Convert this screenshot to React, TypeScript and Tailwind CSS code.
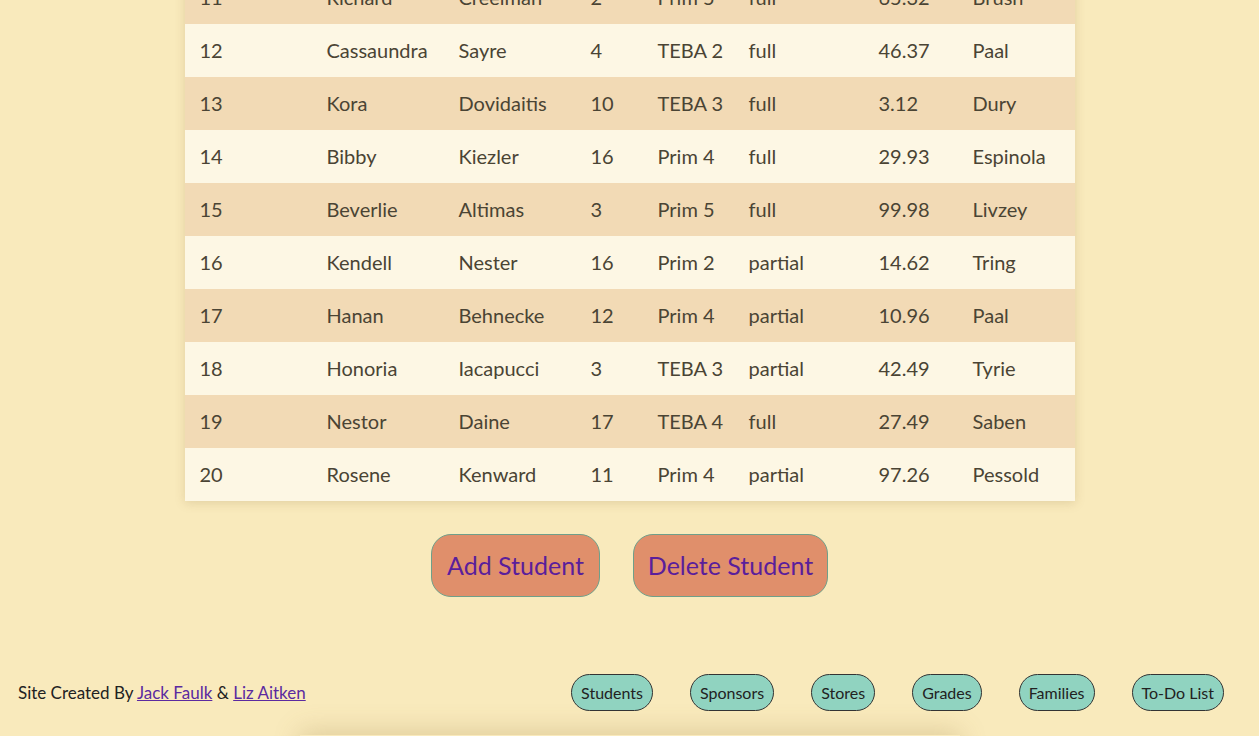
const rows = [
  ["11", "Richard", "Creelman", "2", "Prim 5", "full", "65.32", "Brush"],
  ["12", "Cassaundra", "Sayre", "4", "TEBA 2", "full", "46.37", "Paal"],
  ["13", "Kora", "Dovidaitis", "10", "TEBA 3", "full", "3.12", "Dury"],
  ["14", "Bibby", "Kiezler", "16", "Prim 4", "full", "29.93", "Espinola"],
  ["15", "Beverlie", "Altimas", "3", "Prim 5", "full", "99.98", "Livzey"],
  ["16", "Kendell", "Nester", "16", "Prim 2", "partial", "14.62", "Tring"],
  ["17", "Hanan", "Behnecke", "12", "Prim 4", "partial", "10.96", "Paal"],
  ["18", "Honoria", "Iacapucci", "3", "TEBA 3", "partial", "42.49", "Tyrie"],
  ["19", "Nestor", "Daine", "17", "TEBA 4", "full", "27.49", "Saben"],
  ["20", "Rosene", "Kenward", "11", "Prim 4", "partial", "97.26", "Pessold"],
];

const colWidths = ["w-[127px]", "w-[132px]", "w-[132px]", "w-[67px]", "w-[91px]", "w-[130px]", "w-[94px]", "w-[117px]"];

const navLinks = ["Students", "Sponsors", "Stores", "Grades", "Families", "To-Do List"];

export default function App() {
  return (
    <div className="min-h-screen h-[736px] overflow-hidden bg-[#f9eabc] font-['Lato','Noto_Sans',sans-serif] text-[#4a4434]">
      {/* page is scrolled, so the first row sits partly above the fold */}
      <div className="-mt-[29px]">
        <div className="mx-auto w-[890px] shadow-[0_2px_10px_rgba(120,90,40,0.18)]">
          <table className="w-full table-fixed border-collapse">
            <colgroup>
              {colWidths.map((w, i) => (
                <col key={i} className={w} />
              ))}
            </colgroup>
            <tbody>
              {rows.map((r, i) => (
                <tr key={r[0]} className={`h-[53px] ${i % 2 === 0 ? "bg-[#f2dab5]" : "bg-[#fdf7e4]"}`}>
                  {r.map((c, j) => (
                    <td key={j} className="pl-[15px] pb-[2px] text-[20px] leading-none whitespace-nowrap">
                      {c}
                    </td>
                  ))}
                </tr>
              ))}
            </tbody>
          </table>
        </div>
      </div>

      <div className="mt-[33px] flex justify-center gap-[33px]">
        <button className="h-[63px] w-[169px] rounded-[20px] border border-[#6f9f8a] bg-[#e08f6b] text-[25px] text-[#5a1e9b]">
          Add Student
        </button>
        <button className="h-[63px] w-[195px] rounded-[20px] border border-[#6f9f8a] bg-[#e08f6b] text-[25px] text-[#5a1e9b]">
          Delete Student
        </button>
      </div>

      <footer className="mt-[77px] flex items-center justify-between pl-[18px] pr-[35px]">
        <p className="text-[17px] text-[#222]">
          Site Created By{" "}
          <a href="#" className="text-[#5b2aa0] underline">
            Jack Faulk
          </a>{" "}
          &amp;{" "}
          <a href="#" className="text-[#5b2aa0] underline">
            Liz Aitken
          </a>
        </p>
        <nav className="flex gap-[37px]">
          {navLinks.map((n) => (
            <a
              key={n}
              href="#"
              className="flex h-[37px] items-center rounded-full border-[1.5px] border-[#333] bg-[#90d3c0] px-[9px] text-[16px] text-[#222]"
            >
              {n}
            </a>
          ))}
        </nav>
      </footer>

      <div className="mx-auto mt-[24px] h-[200px] w-[660px] shadow-[0_-4px_24px_rgba(150,120,60,0.25)]" />
    </div>
  );
}
